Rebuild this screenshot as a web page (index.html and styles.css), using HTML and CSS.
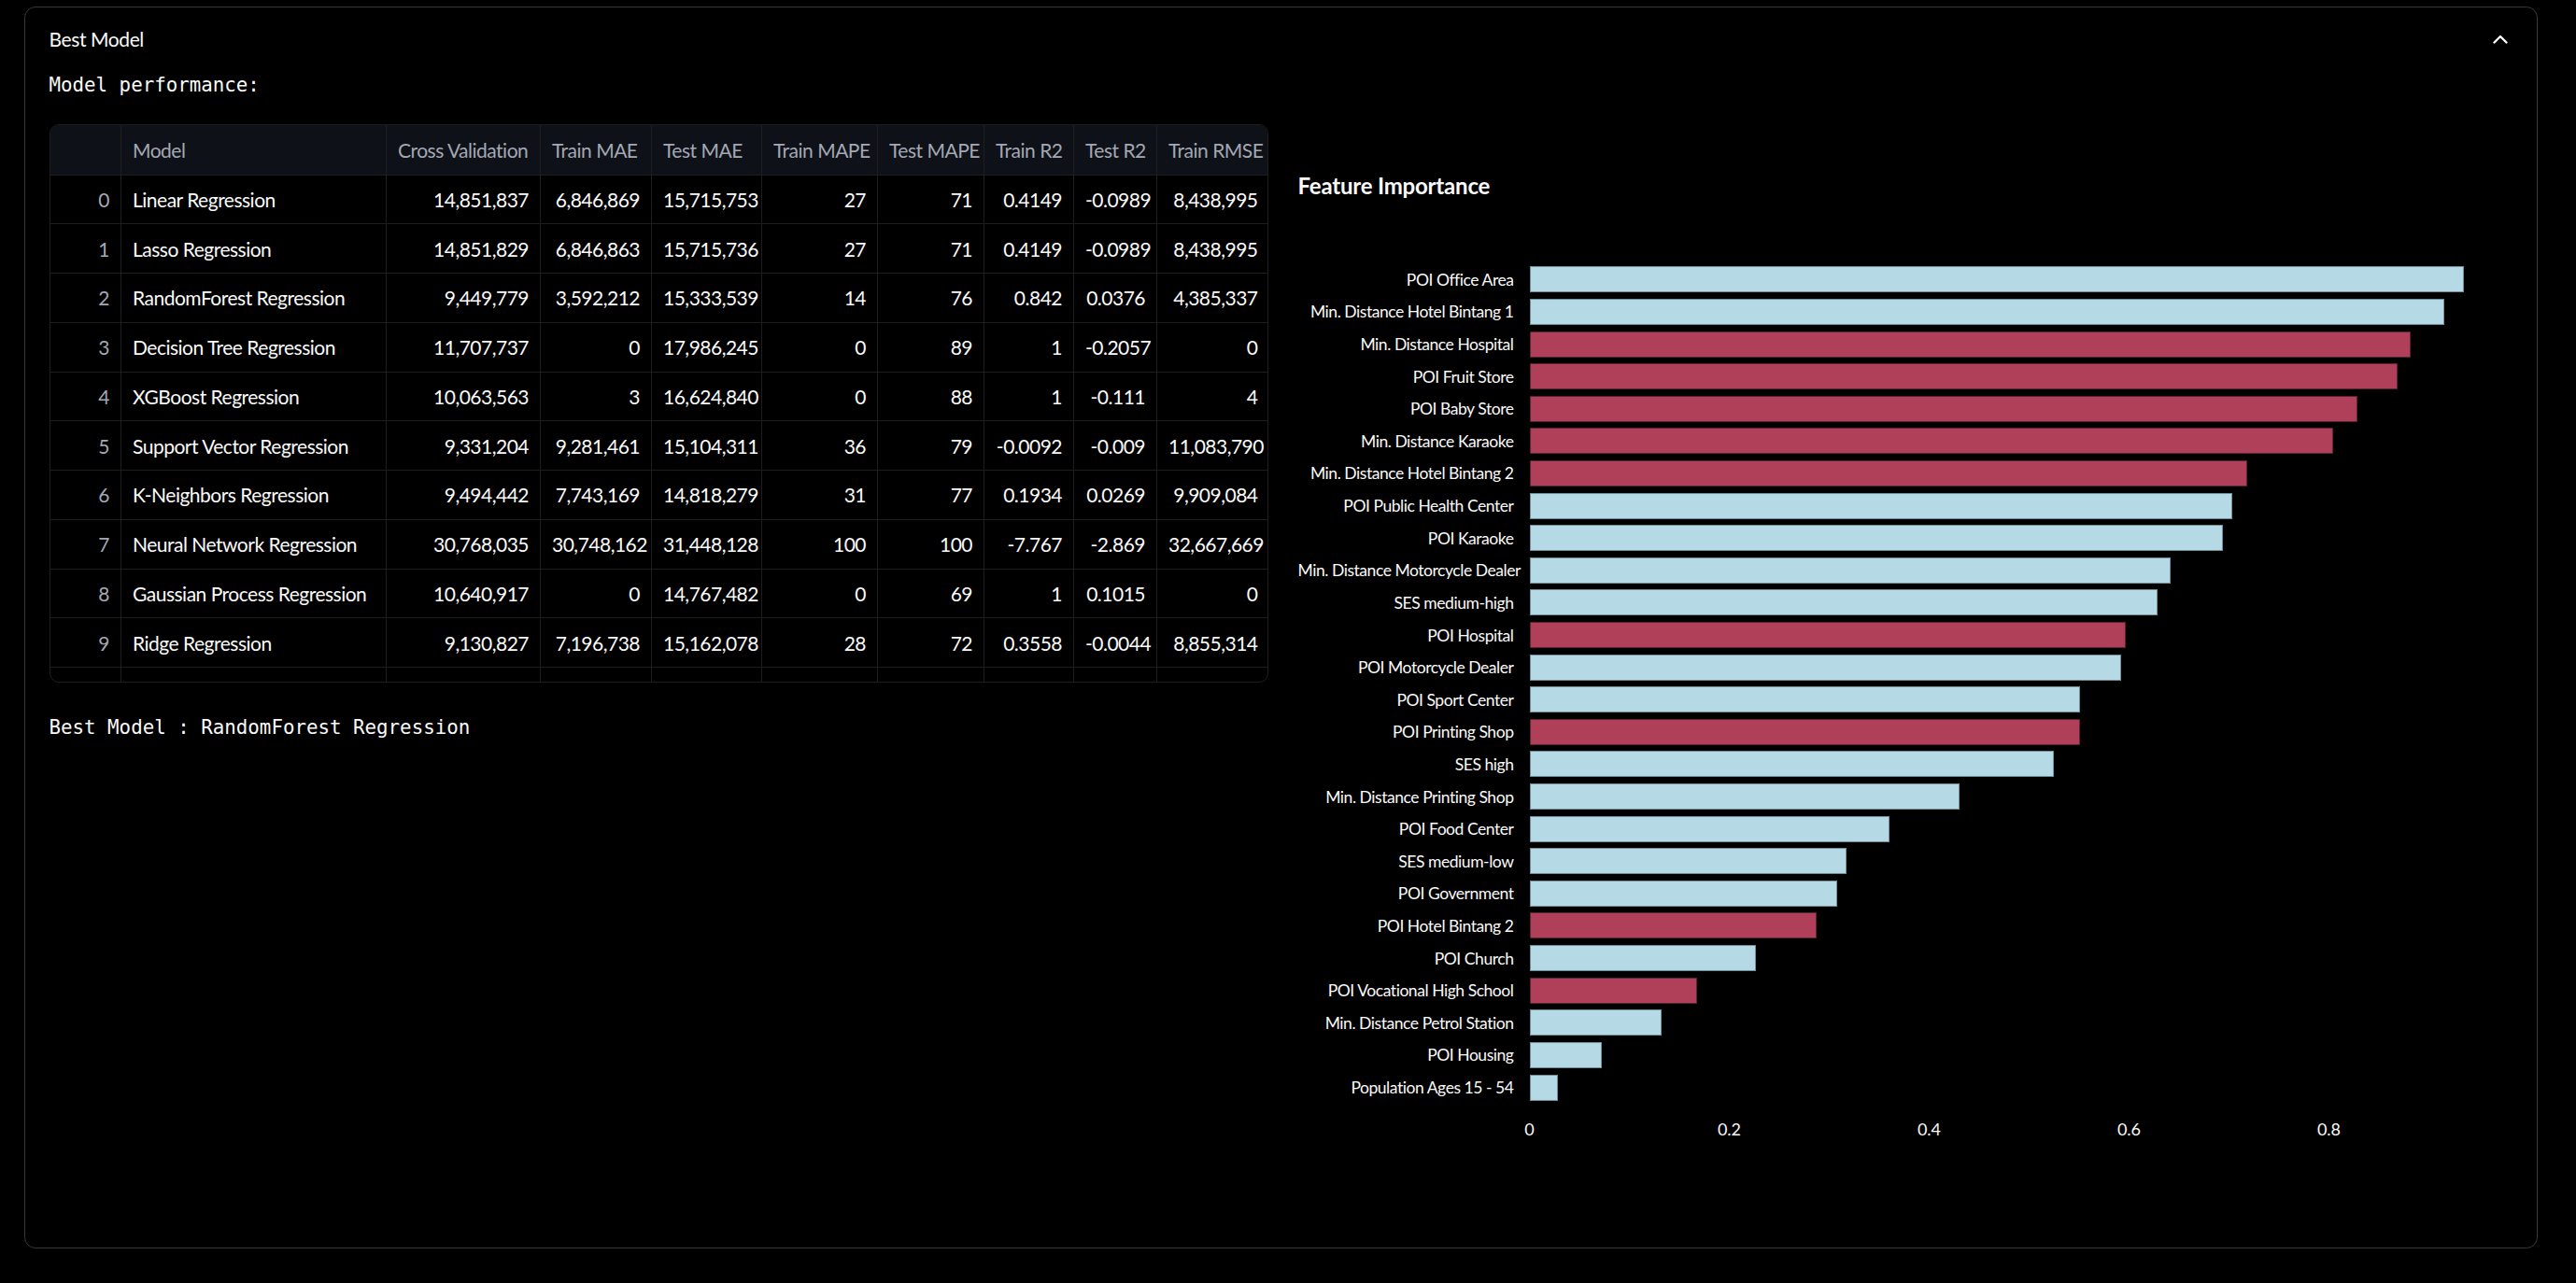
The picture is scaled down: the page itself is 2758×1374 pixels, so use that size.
FILE: index.html
```html
<!DOCTYPE html>
<html lang="en">
<head>
<meta charset="utf-8">
<title>Best Model</title>
<link rel="stylesheet" href="styles.css">
</head>
<body>
<div class="page">
  <section class="expander">
    <header class="exp-header">
      <span class="exp-title">Best Model</span>
      <svg class="chevron" width="16" height="10" viewBox="0 0 16 10"><polyline points="1.5,8.5 8,2 14.5,8.5" fill="none" stroke="#fafafa" stroke-width="2.4" stroke-linecap="round" stroke-linejoin="round"/></svg>
    </header>
    <div class="exp-body">
      <div class="col left">
        <pre class="mono">Model performance:</pre>
        <div class="grid-wrap">
          <table class="df">
            <colgroup>
              <col style="width:76px"><col style="width:284px"><col style="width:165px"><col style="width:119px"><col style="width:118px"><col style="width:124px"><col style="width:114px"><col style="width:96px"><col style="width:89px"><col style="width:120px">
            </colgroup>
            <thead>
              <tr><th></th><th>Model</th><th>Cross Validation</th><th>Train MAE</th><th>Test MAE</th><th>Train MAPE</th><th>Test MAPE</th><th>Train R2</th><th>Test R2</th><th>Train RMSE</th></tr>
            </thead>
            <tbody>
              <tr><td class="idx">0</td><td class="txt">Linear Regression</td><td>14,851,837</td><td>6,846,869</td><td>15,715,753</td><td>27</td><td>71</td><td>0.4149</td><td>-0.0989</td><td>8,438,995</td></tr>
              <tr><td class="idx">1</td><td class="txt">Lasso Regression</td><td>14,851,829</td><td>6,846,863</td><td>15,715,736</td><td>27</td><td>71</td><td>0.4149</td><td>-0.0989</td><td>8,438,995</td></tr>
              <tr><td class="idx">2</td><td class="txt">RandomForest Regression</td><td>9,449,779</td><td>3,592,212</td><td>15,333,539</td><td>14</td><td>76</td><td>0.842</td><td>0.0376</td><td>4,385,337</td></tr>
              <tr><td class="idx">3</td><td class="txt">Decision Tree Regression</td><td>11,707,737</td><td>0</td><td>17,986,245</td><td>0</td><td>89</td><td>1</td><td>-0.2057</td><td>0</td></tr>
              <tr><td class="idx">4</td><td class="txt">XGBoost Regression</td><td>10,063,563</td><td>3</td><td>16,624,840</td><td>0</td><td>88</td><td>1</td><td>-0.111</td><td>4</td></tr>
              <tr><td class="idx">5</td><td class="txt">Support Vector Regression</td><td>9,331,204</td><td>9,281,461</td><td>15,104,311</td><td>36</td><td>79</td><td>-0.0092</td><td>-0.009</td><td>11,083,790</td></tr>
              <tr><td class="idx">6</td><td class="txt">K-Neighbors Regression</td><td>9,494,442</td><td>7,743,169</td><td>14,818,279</td><td>31</td><td>77</td><td>0.1934</td><td>0.0269</td><td>9,909,084</td></tr>
              <tr><td class="idx">7</td><td class="txt">Neural Network Regression</td><td>30,768,035</td><td>30,748,162</td><td>31,448,128</td><td>100</td><td>100</td><td>-7.767</td><td>-2.869</td><td>32,667,669</td></tr>
              <tr><td class="idx">8</td><td class="txt">Gaussian Process Regression</td><td>10,640,917</td><td>0</td><td>14,767,482</td><td>0</td><td>69</td><td>1</td><td>0.1015</td><td>0</td></tr>
              <tr><td class="idx">9</td><td class="txt">Ridge Regression</td><td>9,130,827</td><td>7,196,738</td><td>15,162,078</td><td>28</td><td>72</td><td>0.3558</td><td>-0.0044</td><td>8,855,314</td></tr>
              <tr class="filler"><td></td><td></td><td></td><td></td><td></td><td></td><td></td><td></td><td></td><td></td></tr>
            </tbody>
          </table>
        </div>
        <pre class="mono best">Best Model : RandomForest Regression</pre>
      </div>
      <div class="col right">
        <div class="chart">
          <h3 class="chart-title">Feature Importance</h3>
          <div class="bars">
            <div class="bar-row"><span class="lbl">POI Office Area</span><span class="track"><span class="bar blue" style="width:1000px"></span></span></div>
            <div class="bar-row"><span class="lbl">Min. Distance Hotel Bintang 1</span><span class="track"><span class="bar blue" style="width:979px"></span></span></div>
            <div class="bar-row"><span class="lbl">Min. Distance Hospital</span><span class="track"><span class="bar red" style="width:943px"></span></span></div>
            <div class="bar-row"><span class="lbl">POI Fruit Store</span><span class="track"><span class="bar red" style="width:929px"></span></span></div>
            <div class="bar-row"><span class="lbl">POI Baby Store</span><span class="track"><span class="bar red" style="width:886px"></span></span></div>
            <div class="bar-row"><span class="lbl">Min. Distance Karaoke</span><span class="track"><span class="bar red" style="width:860px"></span></span></div>
            <div class="bar-row"><span class="lbl">Min. Distance Hotel Bintang 2</span><span class="track"><span class="bar red" style="width:768px"></span></span></div>
            <div class="bar-row"><span class="lbl">POI Public Health Center</span><span class="track"><span class="bar blue" style="width:752px"></span></span></div>
            <div class="bar-row"><span class="lbl">POI Karaoke</span><span class="track"><span class="bar blue" style="width:742px"></span></span></div>
            <div class="bar-row"><span class="lbl">Min. Distance Motorcycle Dealer</span><span class="track"><span class="bar blue" style="width:686px"></span></span></div>
            <div class="bar-row"><span class="lbl">SES medium-high</span><span class="track"><span class="bar blue" style="width:672px"></span></span></div>
            <div class="bar-row"><span class="lbl">POI Hospital</span><span class="track"><span class="bar red" style="width:638px"></span></span></div>
            <div class="bar-row"><span class="lbl">POI Motorcycle Dealer</span><span class="track"><span class="bar blue" style="width:633px"></span></span></div>
            <div class="bar-row"><span class="lbl">POI Sport Center</span><span class="track"><span class="bar blue" style="width:589px"></span></span></div>
            <div class="bar-row"><span class="lbl">POI Printing Shop</span><span class="track"><span class="bar red" style="width:589px"></span></span></div>
            <div class="bar-row"><span class="lbl">SES high</span><span class="track"><span class="bar blue" style="width:561px"></span></span></div>
            <div class="bar-row"><span class="lbl">Min. Distance Printing Shop</span><span class="track"><span class="bar blue" style="width:460px"></span></span></div>
            <div class="bar-row"><span class="lbl">POI Food Center</span><span class="track"><span class="bar blue" style="width:385px"></span></span></div>
            <div class="bar-row"><span class="lbl">SES medium-low</span><span class="track"><span class="bar blue" style="width:339px"></span></span></div>
            <div class="bar-row"><span class="lbl">POI Government</span><span class="track"><span class="bar blue" style="width:329px"></span></span></div>
            <div class="bar-row"><span class="lbl">POI Hotel Bintang 2</span><span class="track"><span class="bar red" style="width:307px"></span></span></div>
            <div class="bar-row"><span class="lbl">POI Church</span><span class="track"><span class="bar blue" style="width:242px"></span></span></div>
            <div class="bar-row"><span class="lbl">POI Vocational High School</span><span class="track"><span class="bar red" style="width:179px"></span></span></div>
            <div class="bar-row"><span class="lbl">Min. Distance Petrol Station</span><span class="track"><span class="bar blue" style="width:141px"></span></span></div>
            <div class="bar-row"><span class="lbl">POI Housing</span><span class="track"><span class="bar blue" style="width:77px"></span></span></div>
            <div class="bar-row"><span class="lbl">Population Ages 15 - 54</span><span class="track"><span class="bar blue" style="width:30px"></span></span></div>
          </div>
          <div class="axis">
            <span class="axis-spacer"></span>
            <span class="ticks">
              <span class="tick" style="left:0px">0</span>
              <span class="tick" style="left:214px">0.2</span>
              <span class="tick" style="left:428px">0.4</span>
              <span class="tick" style="left:642px">0.6</span>
              <span class="tick" style="left:856px">0.8</span>
            </span>
          </div>
        </div>
      </div>
    </div>
  </section>
</div>
</body>
</html>
```

FILE: styles.css
```css
html, body {
  margin: 0;
  padding: 0;
  background: #000;
  color: #fafafa;
  font-family: "Source Sans Pro", Lato, "Noto Sans", sans-serif;
}

.page {
  padding: 7px 41px 37px 26px;
}

.expander {
  height: 1330px;
  box-sizing: border-box;
  border: 1.5px solid rgba(250, 250, 250, 0.22);
  border-radius: 12px;
}

.exp-header {
  height: 67px;
  display: flex;
  align-items: center;
  justify-content: space-between;
  padding: 0 31px 0 25.5px;
}

.exp-title {
  font-size: 21px;
  line-height: 30px;
  letter-spacing: -0.4px;
}

.chevron {
  display: block;
}

.exp-body {
  display: grid;
  grid-template-columns: 1306px 1306px;
  column-gap: 24px;
  padding: 0 25.5px;
}

.mono {
  margin: 0;
  font-family: "DejaVu Sans Mono", "Liberation Mono", monospace;
  font-size: 20.8px;
  line-height: 32px;
  color: #fafafa;
}

.left .mono:first-child {
  margin-bottom: 26px;
}

.mono.best {
  margin-top: 32px;
}

.grid-wrap {
  width: 1305px;
  border: 1.5px solid rgba(250, 250, 250, 0.12);
  border-radius: 10px;
  overflow: hidden;
  box-sizing: border-box;
}

.df {
  border-collapse: collapse;
  table-layout: fixed;
  width: 100%;
  font-size: 21px;
  letter-spacing: -0.5px;
}

.df th,
.df td {
  border-left: 1.5px solid rgba(250, 250, 250, 0.12);
  border-bottom: 1.5px solid rgba(250, 250, 250, 0.12);
  padding: 0 12px;
  white-space: nowrap;
  overflow: hidden;
}

.df th:first-child,
.df td:first-child {
  border-left: none;
}

.df thead tr {
  height: 53px;
  background: #0e1117;
}

.df th {
  font-weight: 400;
  text-align: left;
  color: #a3a8b4;
}

.df tbody tr {
  height: 52.75px;
}

.df td {
  text-align: right;
  color: #fafafa;
}

.df td.txt {
  text-align: left;
}

.df td.idx {
  color: #a3a8b4;
}

.df tr.filler {
  height: 15px;
}

.df tr.filler td {
  border-bottom: none;
}

.chart {
  padding: 0 0 0 7px;
}

.chart-title {
  margin: 109px 0 0 0;
  font-size: 24px;
  line-height: 30px;
  font-weight: 700;
  letter-spacing: -0.2px;
  color: #fafafa;
}

.bars {
  margin-top: 68px;
  display: flex;
  flex-direction: column;
}

.bar-row {
  height: 34.62px;
  display: grid;
  grid-template-columns: 231px 1fr;
  column-gap: 17px;
  align-items: center;
}

.lbl {
  text-align: right;
  font-size: 17.5px;
  letter-spacing: -0.45px;
  color: #fafafa;
  white-space: nowrap;
}

.track {
  display: block;
  height: 28px;
}

.bar {
  display: block;
  height: 28px;
  box-sizing: border-box;
}

.bar.blue {
  background: #b5d9e5;
  border: 1.5px solid #6f8e9a;
}

.bar.red {
  background: #b04059;
  border: 1.5px solid #5a2230;
}

.axis {
  display: grid;
  grid-template-columns: 231px 1fr;
  column-gap: 17px;
  margin-top: 16px;
  height: 22px;
}

.ticks {
  position: relative;
  display: block;
}

.tick {
  position: absolute;
  top: 0;
  transform: translateX(-50%);
  font-size: 18px;
  line-height: 22px;
  color: #fafafa;
}
```
